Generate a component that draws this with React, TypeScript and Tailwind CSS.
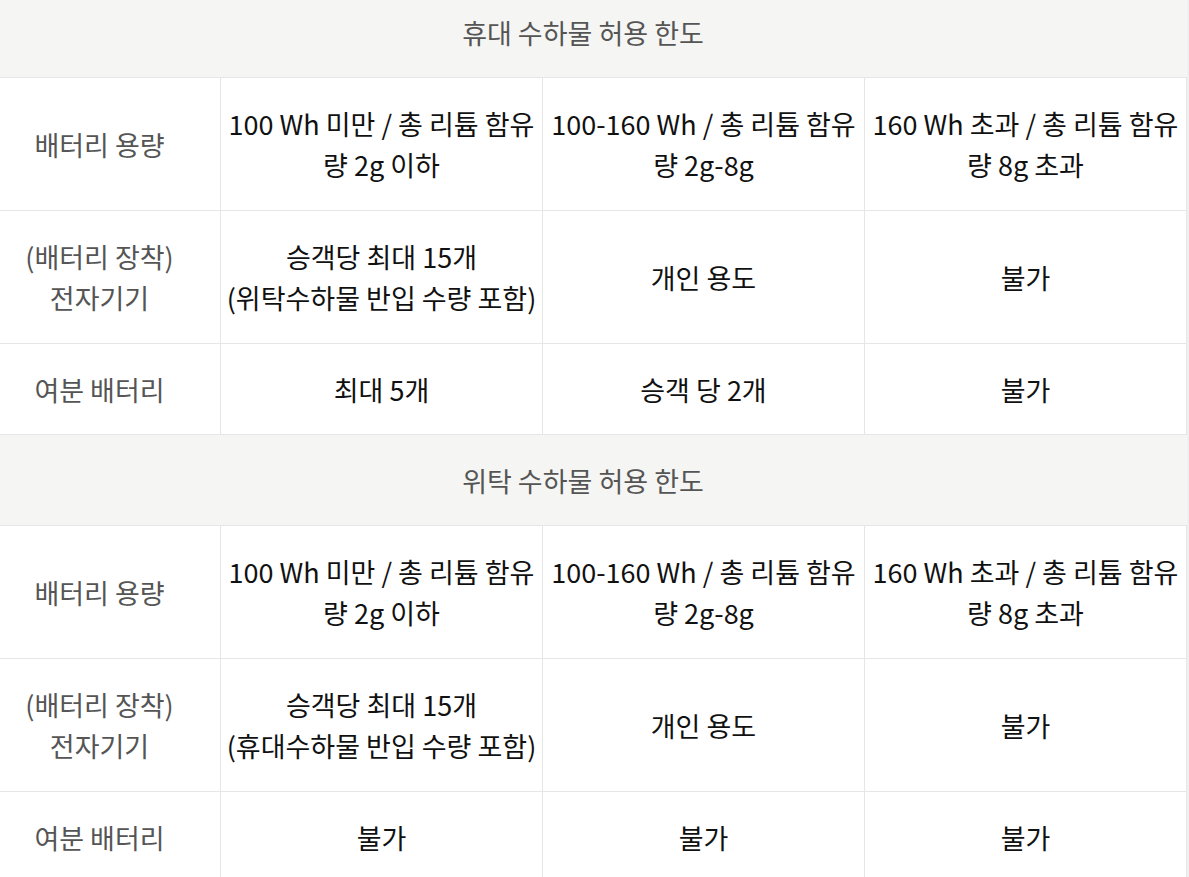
import React from "react";

const font = { fontFamily: '"Noto Sans CJK KR", "Noto Sans", sans-serif' };

type Row = { label: React.ReactNode; cells: React.ReactNode[]; tall: boolean };

function Header({ title }: { title: string }) {
  return (
    <div className="col-span-4 h-[91px] bg-[#f5f5f3] border-b border-[#e6e6e6] flex items-center justify-center text-[#555] text-[27px] leading-[41px]">
      {title}
    </div>
  );
}

function BodyRow({ row }: { row: Row }) {
  const h = row.tall ? "h-[133px]" : "h-[91px]";
  return (
    <>
      <div className={`${h} border-b border-r border-[#e6e6e6] flex items-center justify-center text-center text-[#555] text-[27px] leading-[41px]`}>
        {row.label}
      </div>
      {row.cells.map((c, i) => (
        <div
          key={i}
          className={`${h} border-b border-r border-[#e6e6e6] flex items-center justify-center text-center text-[#111] text-[27px] leading-[41px] whitespace-nowrap`}
        >
          {c}
        </div>
      ))}
    </>
  );
}

const cap = [
  <>100 Wh 미만 / 총 리튬 함유<br />량 2g 이하</>,
  <>100-160 Wh / 총 리튬 함유<br />량 2g-8g</>,
  <>160 Wh 초과 / 총 리튬 함유<br />량 8g 초과</>,
];

const sec1: Row[] = [
  { label: "배터리 용량", cells: cap, tall: true },
  {
    label: <>(배터리 장착)<br />전자기기</>,
    cells: [<>승객당 최대 15개<br />(위탁수하물 반입 수량 포함)</>, "개인 용도", "불가"],
    tall: true,
  },
  { label: "여분 배터리", cells: ["최대 5개", "승객 당 2개", "불가"], tall: false },
];

const sec2: Row[] = [
  { label: "배터리 용량", cells: cap, tall: true },
  {
    label: <>(배터리 장착)<br />전자기기</>,
    cells: [<>승객당 최대 15개<br />(휴대수하물 반입 수량 포함)</>, "개인 용도", "불가"],
    tall: true,
  },
  { label: "여분 배터리", cells: ["불가", "불가", "불가"], tall: false },
];

export default function App() {
  return (
    <div className="w-[1189px] h-[877px] overflow-hidden bg-white relative" style={font}>
      <div className="flex">
        <div className="-ml-[21px] -mt-[13px] grid grid-cols-[242px_322px_322px_322px] w-[1208px] shrink-0">
          <Header title="휴대 수하물 허용 한도" />
          {sec1.map((r, i) => (
            <BodyRow key={i} row={r} />
          ))}
          <Header title="위탁 수하물 허용 한도" />
          {sec2.map((r, i) => (
            <BodyRow key={i} row={r} />
          ))}
        </div>
        <div className="w-[2px] shrink-0 bg-[#f0f0f0] h-[877px]" />
      </div>
    </div>
  );
}
